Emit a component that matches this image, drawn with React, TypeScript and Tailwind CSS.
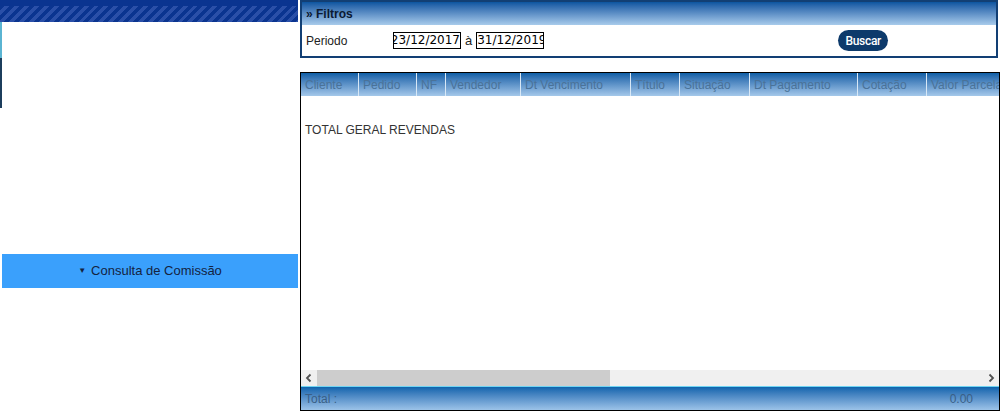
const columns: { label: string; w: string }[] = [
  { label: "Cliente", w: "w-[58px]" },
  { label: "Pedido", w: "w-[58px]" },
  { label: "NF", w: "w-[29px]" },
  { label: "Vendedor", w: "w-[75px]" },
  { label: "Dt Vencimento", w: "w-[110px]" },
  { label: "Título", w: "w-[49px]" },
  { label: "Situação", w: "w-[70px]" },
  { label: "Dt Pagamento", w: "w-[108px]" },
  { label: "Cotação", w: "w-[69px]" },
  { label: "Valor Parcela", w: "w-[90px]" },
];

function Chevron({ dir }: { dir: "left" | "right" }) {
  return (
    <svg width="16" height="16" viewBox="0 0 16 16" className="shrink-0">
      <path
        d={dir === "left" ? "M9.5 4.5 L6 8 L9.5 11.5" : "M6.5 4.5 L10 8 L6.5 11.5"}
        fill="none"
        stroke="#505050"
        strokeWidth="1.8"
      />
    </svg>
  );
}

function Sidebar() {
  return (
    <div className="w-[298px] shrink-0 flex flex-col">
      <div className="h-[22px] bg-[#0a3490] pt-[6px]">
        <div className="h-[16px] bg-[image:repeating-linear-gradient(135deg,#0a3490_0px,#0a3490_3.5px,#2a4fa8_3.5px,#2a4fa8_7px)]" />
      </div>
      <div className="flex flex-col">
        <div className="h-[36px] w-[2px] bg-[#5ab4d2]" />
        <div className="h-[50px] w-[2px] bg-[#1c3d5c]" />
      </div>
      <div className="mt-[146px] ml-[2px] h-[34px] bg-[#3aa0fc] flex items-center justify-center gap-[5px] text-[13px] text-[#14233f]">
        <span className="text-[8px] leading-none">▼</span>
        <span>Consulta de Comissão</span>
      </div>
    </div>
  );
}

function Filtros() {
  return (
    <div className="w-[698px] border-2 border-[#123f74]">
      <div className="h-[23px] bg-gradient-to-b from-[#0a55a0] to-[#a8cbeb] flex items-center pl-[4px] text-[12px] font-bold text-[#0b1a33]">
        » Filtros
      </div>
      <div className="h-[31px] flex items-center pl-[4px] text-[12px] text-[#222]">
        <span className="w-[87px]">Periodo</span>
        <div className="w-[68px] h-[17px] border border-black flex justify-end overflow-hidden font-['DejaVu_Sans',sans-serif] text-[12px] leading-[15px] text-black">
          <span className="whitespace-nowrap">23/12/2017</span>
        </div>
        <span className="mx-[4px] text-[13px]">à</span>
        <div className="w-[68px] h-[17px] border border-black flex justify-start overflow-hidden font-['DejaVu_Sans',sans-serif] text-[12px] leading-[15px] text-black">
          <span className="whitespace-nowrap">31/12/2019</span>
        </div>
        <button className="ml-[294px] w-[50px] h-[21px] rounded-full bg-[#0d3a6b] text-white text-[12px] font-['Roboto',sans-serif] font-medium tracking-tight">
          Buscar
        </button>
      </div>
    </div>
  );
}

function Tabela() {
  return (
    <div className="mt-[14px] w-[700px] flex-1 border-[1.5px] border-black flex flex-col overflow-hidden">
      <div className="h-[23px] shrink-0 flex bg-gradient-to-b from-[#0c5fa6] to-[#a4c8ea] text-[12px] text-[#4a7298] overflow-hidden">
        {columns.map((c) => (
          <div
            key={c.label}
            className={`${c.w} shrink-0 h-full flex items-center pl-[4px] border-r border-[#d8e8f6] whitespace-nowrap overflow-hidden`}
          >
            {c.label}
          </div>
        ))}
      </div>
      <div className="flex-1 pt-[25px] pl-[4px] text-[12px] text-[#333]">TOTAL GERAL REVENDAS</div>
      <div className="h-[16px] shrink-0 bg-[#f0f0f0] flex items-center">
        <Chevron dir="left" />
        <div className="w-[293px] h-full bg-[#cdcdcd]" />
        <div className="flex-1" />
        <Chevron dir="right" />
      </div>
      <div className="h-[24px] shrink-0 border-t border-[#6fd4f2] bg-gradient-to-b from-[#0a64ad] to-[#9cc3e8] flex items-center justify-between pl-[4px] pr-[26px] text-[12px] text-[#3a5f86]">
        <span>Total :</span>
        <span>0.00</span>
      </div>
    </div>
  );
}

export default function App() {
  return (
    <div className="w-[1002px] h-[411px] bg-white flex font-['Liberation_Sans',Arial,sans-serif] overflow-hidden">
      <Sidebar />
      <div className="ml-[2px] flex flex-col">
        <Filtros />
        <Tabela />
      </div>
    </div>
  );
}
